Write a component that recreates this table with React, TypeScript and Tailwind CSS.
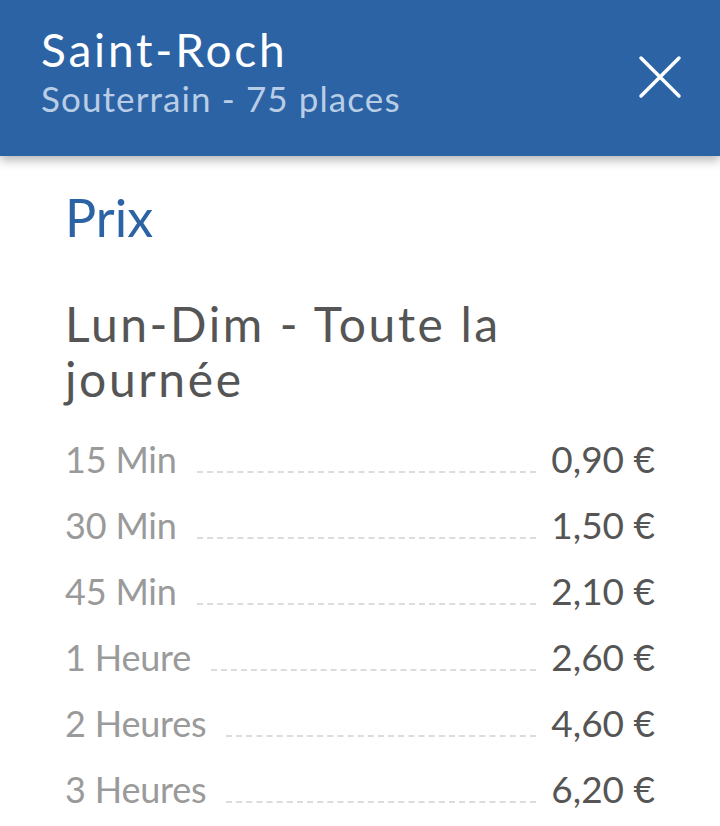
import React from "react";

const rows = [
  { label: "15 Min", price: "0,90 €" },
  { label: "30 Min", price: "1,50 €" },
  { label: "45 Min", price: "2,10 €" },
  { label: "1 Heure", price: "2,60 €" },
  { label: "2 Heures", price: "4,60 €" },
  { label: "3 Heures", price: "6,20 €" },
];

function CloseIcon() {
  return (
    <svg width="44" height="44" viewBox="0 0 44 44" fill="none">
      <path d="M3 3L41 41M41 3L3 41" stroke="white" strokeWidth="3.5" strokeLinecap="round" />
    </svg>
  );
}

export default function App() {
  return (
    <div className="w-[720px] h-[826px] bg-white overflow-hidden font-['Lato',sans-serif]">
      {/* Header */}
      <header className="relative z-10 h-[156px] bg-[#2b63a4] shadow-[0_4px_10px_rgba(0,0,0,0.3)] flex items-start justify-between pl-[41px] pr-[38px] pt-[22px]">
        <div className="flex flex-col">
          <h1 className="text-[46px] leading-[56px] tracking-[2.8px] text-white">Saint-Roch</h1>
          <p className="text-[35px] leading-[40px] tracking-[1.1px] text-[#b9cde6]">Souterrain - 75 places</p>
        </div>
        <button className="mt-[33px]">
          <CloseIcon />
        </button>
      </header>

      {/* Body */}
      <main className="px-[65px] pt-[31px]">
        <h2 className="text-[52px] leading-[60px] text-[#2b63a4]">Prix</h2>
        <h3 className="mt-[49px] max-w-[520px] text-[48px] leading-[55px] tracking-[2.6px] text-[#555555]">
          Lun-Dim - Toute la journée
        </h3>
        <ul className="mt-[25px] flex flex-col">
          {rows.map((r) => (
            <li key={r.label} className="h-[66px] flex items-baseline">
              <span className="text-[36px] tracking-[-0.2px] text-[#9a9a9a]">{r.label}</span>
              <span className="flex-1 ml-[20px] mr-[15px] border-b-2 border-dashed border-[#dcdcdc]" />
              <span className="text-[37px] text-[#555555]">{r.price}</span>
            </li>
          ))}
        </ul>
      </main>
    </div>
  );
}
